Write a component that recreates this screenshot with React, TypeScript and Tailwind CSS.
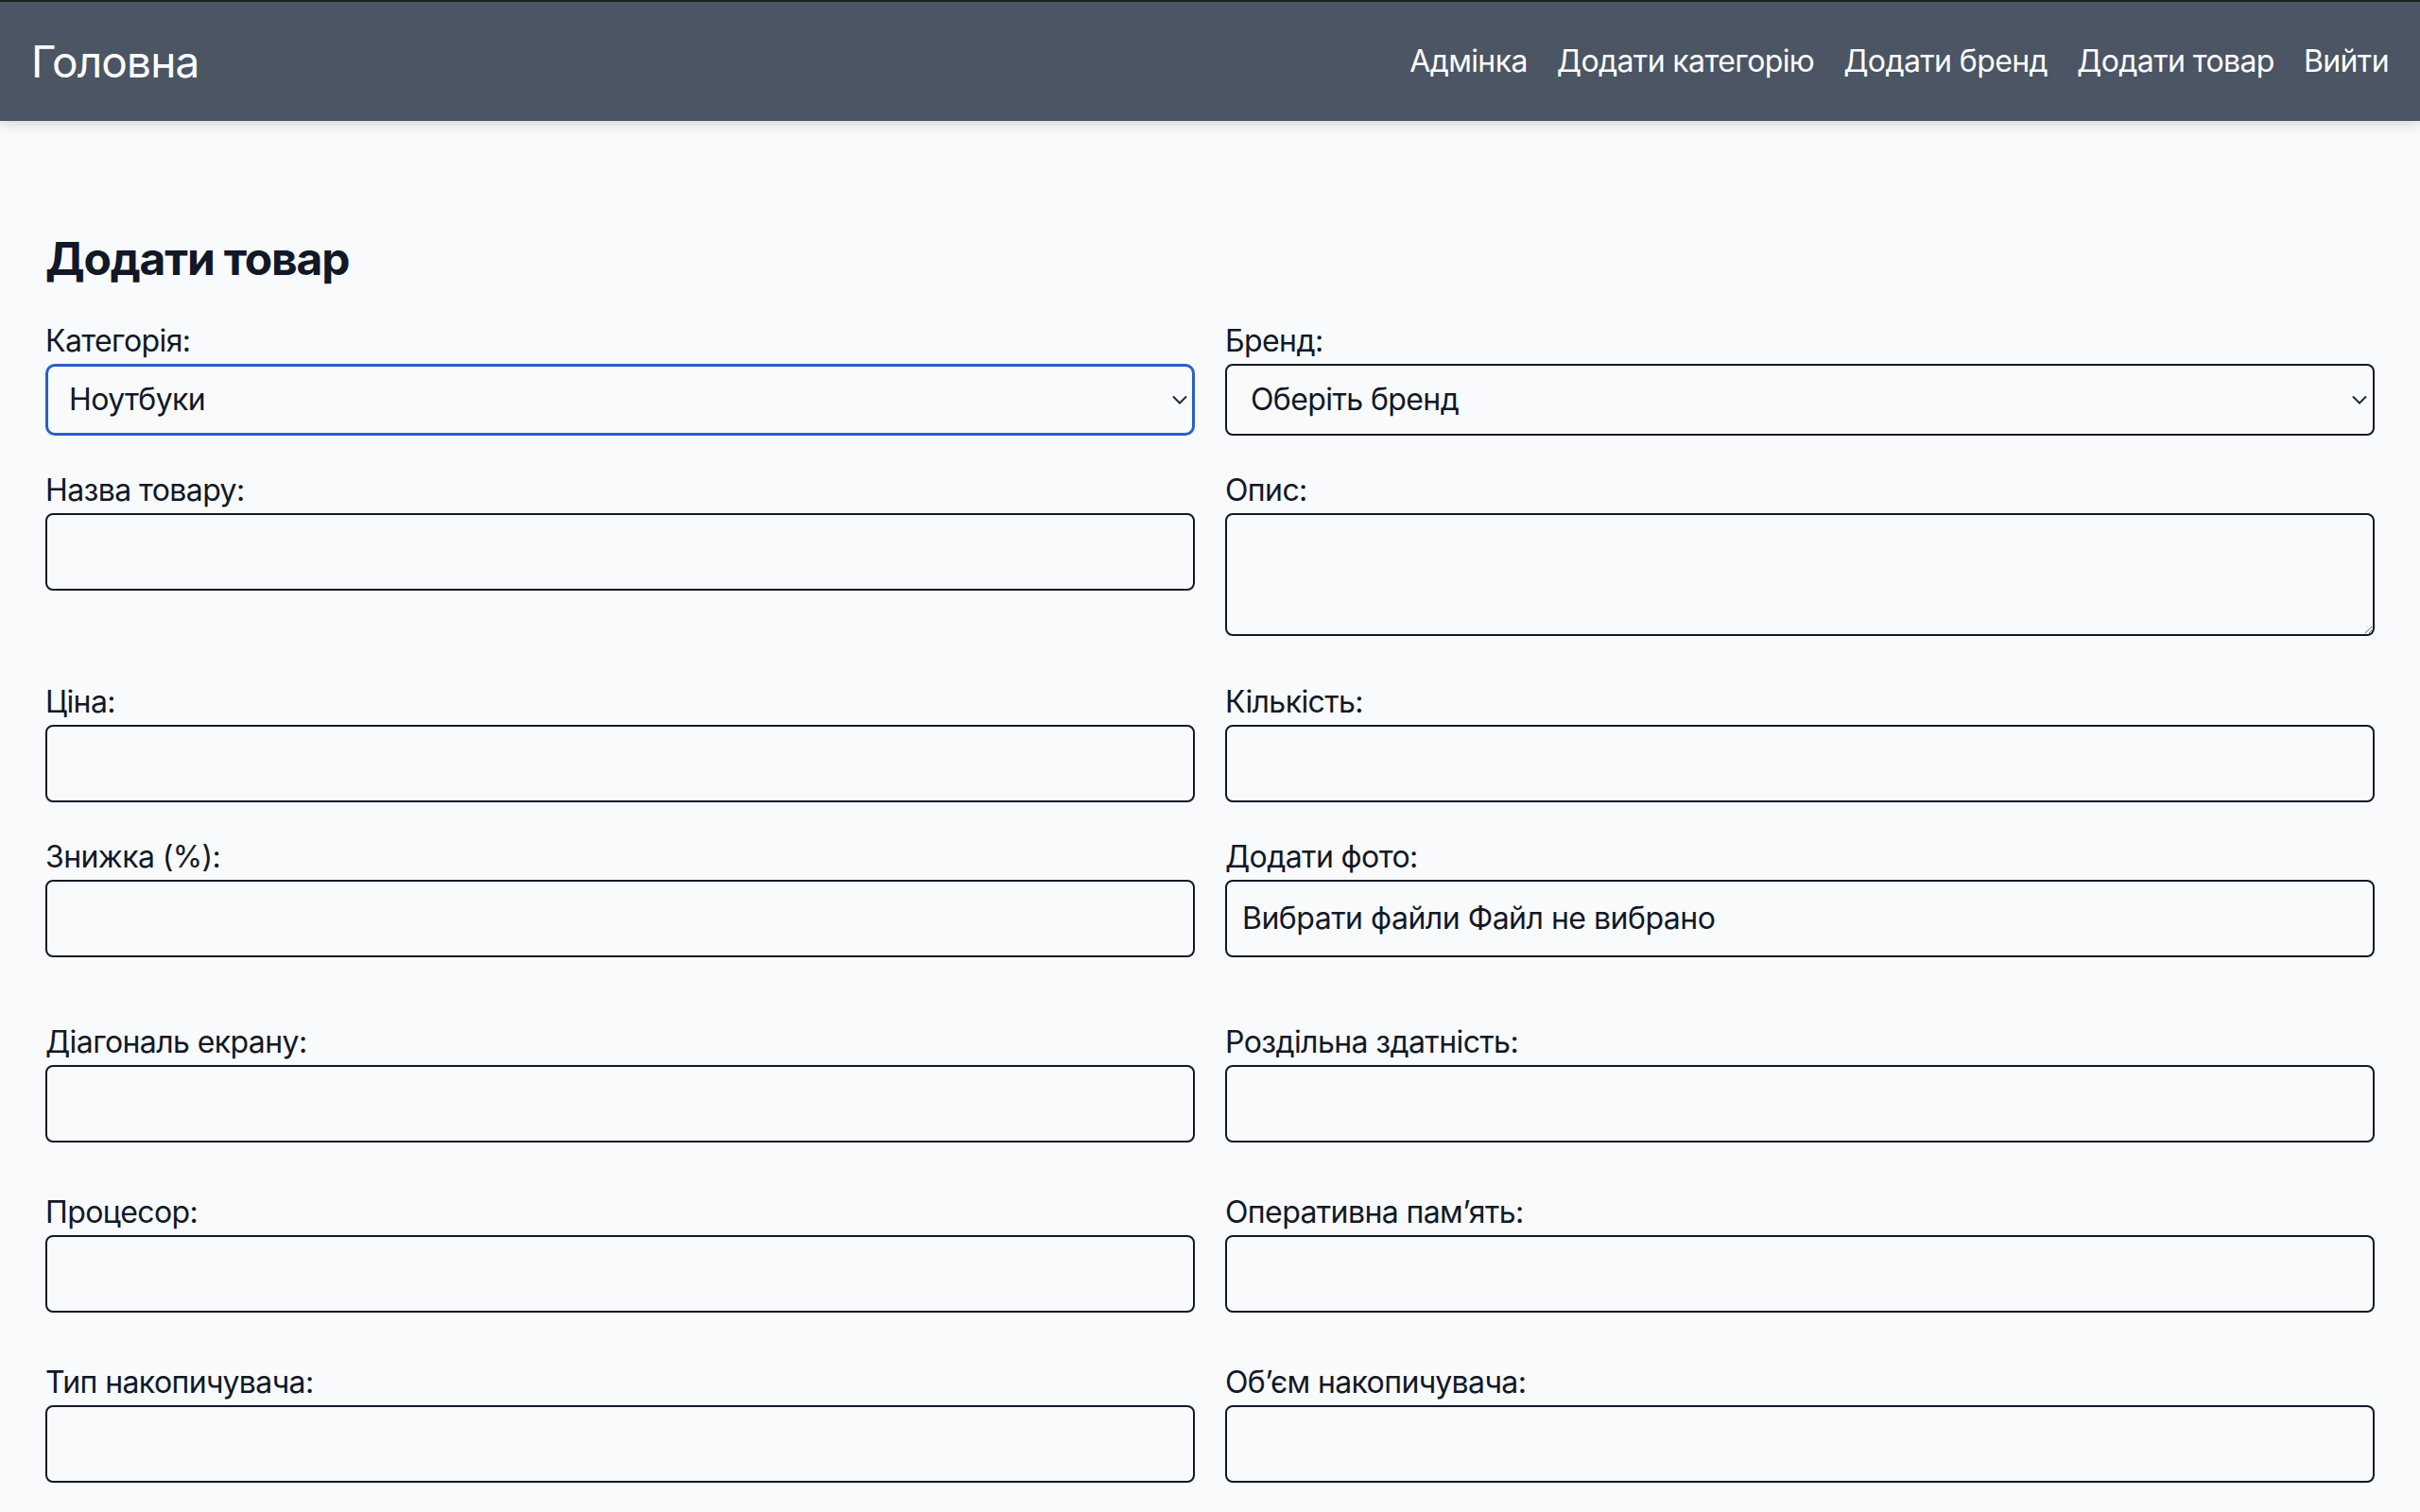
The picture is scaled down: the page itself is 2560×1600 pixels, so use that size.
import React from "react";

const navLinks = ["Адмінка", "Додати категорію", "Додати бренд", "Додати товар", "Вийти"];

const specRows: [string, string][] = [
  ["Діагональ екрану:", "Роздільна здатність:"],
  ["Процесор:", "Оперативна пам’ять:"],
  ["Тип накопичувача:", "Об’єм накопичувача:"],
];

const Label = ({ children }: { children: React.ReactNode }) => (
  <label className="block h-[48px] text-[32px] leading-[48px] tracking-[-0.6px] text-[#111827]">{children}</label>
);

const TextInput = () => (
  <input
    type="text"
    className="block h-[82px] w-full rounded-[8px] border-2 border-[#111827] bg-transparent px-[16px] text-[32px] text-[#111827] outline-none"
  />
);

const Chevron = () => (
  <svg
    width="16"
    height="10"
    viewBox="0 0 16 10"
    className="pointer-events-none absolute right-[8px] top-1/2 -translate-y-1/2"
  >
    <polyline points="1,1.5 8,8.5 15,1.5" fill="none" stroke="#1f2937" strokeWidth="2" />
  </svg>
);

const Select = ({ value, focused }: { value: string; focused?: boolean }) => (
  <div className="relative">
    <select
      defaultValue={value}
      className={
        focused
          ? "block h-[76px] w-full appearance-none rounded-[10px] border-[3px] border-[#2a5ec9] bg-transparent pl-[22px] pr-[40px] text-[32px] tracking-[-0.6px] text-[#111827] outline-none"
          : "block h-[76px] w-full appearance-none rounded-[8px] border-2 border-[#111827] bg-transparent pl-[25px] pr-[40px] text-[32px] tracking-[-0.6px] text-[#111827] outline-none"
      }
    >
      <option>{value}</option>
    </select>
    <Chevron />
  </div>
);

export default function App() {
  return (
    <div className="min-h-screen bg-[#f9fafb] [font-family:Inter,'Noto_Sans',sans-serif]">
      {/* navbar */}
      <nav className="flex h-[128px] items-center justify-between border-t-2 border-t-[#1c1d21] bg-[#4b5563] px-[33px] shadow-[0_4px_12px_rgba(0,0,0,0.14)]">
        <a className="text-[46px] leading-none tracking-[-0.9px] text-white">Головна</a>
        <div className="flex items-center gap-[31px]">
          {navLinks.map((l) => (
            <a key={l} className="text-[32px] leading-none tracking-[-0.6px] text-white">
              {l}
            </a>
          ))}
        </div>
      </nav>

      <main className="px-[48px] pb-[60px] pt-[114px]">
        <h1 className="mb-[31px] h-[64px] text-[48px] font-bold leading-[64px] tracking-[-1.2px] text-[#111827]">
          Додати товар
        </h1>

        <div className="grid grid-cols-2 items-start gap-x-[32px]">
          <div>
            <Label>Категорія:</Label>
            <Select value="Ноутбуки" focused />
          </div>
          <div>
            <Label>Бренд:</Label>
            <Select value="Оберіть бренд" />
          </div>
        </div>

        <div className="mt-[34px] grid grid-cols-2 items-start gap-x-[32px]">
          <div>
            <Label>Назва товару:</Label>
            <TextInput />
          </div>
          <div>
            <Label>Опис:</Label>
            <textarea className="block h-[130px] w-full resize-y rounded-[8px] border-2 border-[#111827] bg-transparent px-[16px] py-[12px] text-[32px] outline-none" />
          </div>
        </div>

        <div className="mt-[46px] grid grid-cols-2 items-start gap-x-[32px]">
          <div>
            <Label>Ціна:</Label>
            <TextInput />
          </div>
          <div>
            <Label>Кількість:</Label>
            <TextInput />
          </div>
        </div>

        <div className="mt-[34px] grid grid-cols-2 items-start gap-x-[32px]">
          <div>
            <Label>Знижка (%):</Label>
            <TextInput />
          </div>
          <div>
            <Label>Додати фото:</Label>
            <div className="flex h-[82px] w-full items-center rounded-[8px] border-2 border-[#111827] px-[16px] text-[32px] tracking-[-0.5px] text-[#111827]">
              Вибрати файли Файл не вибрано
            </div>
          </div>
        </div>

        {/* characteristics */}
        <div className="mt-[66px] flex flex-col gap-[50px]">
          {specRows.map(([a, b]) => (
            <div key={a} className="grid grid-cols-2 items-start gap-x-[32px]">
              <div>
                <Label>{a}</Label>
                <TextInput />
              </div>
              <div>
                <Label>{b}</Label>
                <TextInput />
              </div>
            </div>
          ))}
        </div>
      </main>
    </div>
  );
}
